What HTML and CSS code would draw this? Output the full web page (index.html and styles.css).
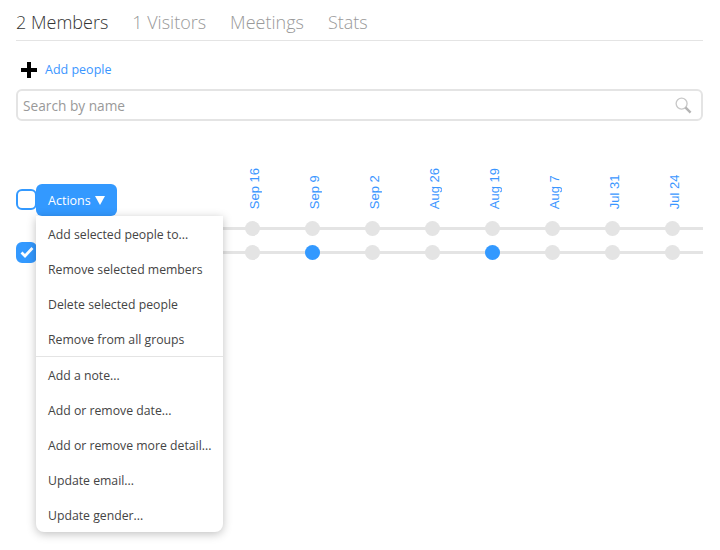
FILE: index.html
```html
<!DOCTYPE html>
<html>
<head>
<title>Members</title>
<link rel="stylesheet" href="styles.css">
</head>
<body>
	<nav class="tabs">
		<a class="tab active">2 Members</a>
		<a class="tab">1 Visitors</a>
		<a class="tab">Meetings</a>
		<a class="tab">Stats</a>
	</nav>
	<div class="add-row">
		<svg class="plus" width="18" height="18" viewBox="0 0 18 18"><path d="M7 1h4v6h6v4h-6v6H7v-6H1V7h6z"/></svg>
		<a class="add-link">Add people</a>
	</div>
	<div class="search">
		<span class="search-text">Search by name</span>
		<svg class="search-icon" width="17" height="17" viewBox="0 0 18 18">
			<circle cx="7" cy="7" r="5.8" fill="none" stroke="#c8c8c8" stroke-width="1.4"/>
			<path d="M11 11l5.5 5.5" stroke="#b4b4b4" stroke-width="2.6"/>
		</svg>
	</div>
	<section class="attendance">
		<div class="head-row">
			<div class="left-cell">
				<span class="check"></span>
				<button class="actions">Actions <span class="caret"></span></button>
			</div>
			<div class="dates">
				<div class="date"><span>Sep 16</span></div>
				<div class="date"><span>Sep 9</span></div>
				<div class="date"><span>Sep 2</span></div>
				<div class="date"><span>Aug 26</span></div>
				<div class="date"><span>Aug 19</span></div>
				<div class="date"><span>Aug 7</span></div>
				<div class="date"><span>Jul 31</span></div>
				<div class="date"><span>Jul 24</span></div>
			</div>
		</div>
		<div class="person">
			<div class="left-cell"></div>
			<div class="dots">
				<i></i><i></i><i></i><i></i><i></i><i></i><i></i><i></i>
			</div>
		</div>
		<div class="person">
			<div class="left-cell">
				<span class="check checked">
					<svg width="14" height="12" viewBox="0 0 14 12"><path d="M1.5 6.5l3.5 3.5 7.5-8" fill="none" stroke="#fff" stroke-width="2.8"/></svg>
				</span>
			</div>
			<div class="dots">
				<i></i><i class="on"></i><i></i><i></i><i class="on"></i><i></i><i></i><i></i>
			</div>
		</div>
		<ul class="menu">
			<li>Add selected people to...</li>
			<li>Remove selected members</li>
			<li>Delete selected people</li>
			<li class="last-group">Remove from all groups</li>
			<li>Add a note...</li>
			<li>Add or remove date...</li>
			<li>Add or remove more detail...</li>
			<li>Update email...</li>
			<li class="last">Update gender...</li>
		</ul>
	</section>
</body>
</html>
```

FILE: styles.css
```css
html, body {
  margin: 0;
  height: 550px;
  overflow: hidden;
  background: #fff;
}

body {
  padding: 0 17px 0 16px;
  font-family: "Open Sans", "Noto Sans", sans-serif;
  color: #333;
}

.tabs {
  display: flex;
  gap: 24px;
  height: 40px;
  border-bottom: 1px solid #e4e4e4;
  font-size: 18px;
  font-weight: 300;
  line-height: 45px;
}

.tab {
  color: #999;
}

.tab.active {
  color: #333;
}

.add-row {
  display: flex;
  align-items: center;
  height: 18px;
  margin: 20px 0 0 4px;
  gap: 7px;
}

.add-link {
  margin-bottom: 2px;
  color: #3b96ff;
  font-size: 12.5px;
}

.search {
  display: flex;
  align-items: center;
  justify-content: space-between;
  box-sizing: border-box;
  height: 32px;
  margin-top: 10px;
  padding: 0 9px 0 5px;
  border: 2px solid #e4e4e4;
  border-radius: 6px;
}

.search-text {
  color: #999;
  font-size: 13.7px;
}

.attendance {
  position: relative;
  margin-top: 63px;
}

.head-row {
  display: flex;
  align-items: flex-end;
  height: 32px;
}

.left-cell {
  display: flex;
  align-items: center;
  flex: none;
  width: 207px;
}

.head-row .left-cell {
  height: 32px;
}

.head-row .check {
  margin-top: -2px;
}

.check {
  display: flex;
  align-items: center;
  justify-content: center;
  box-sizing: border-box;
  flex: none;
  width: 21px;
  height: 21px;
  margin-right: -1px;
  border: 2px solid #3399ff;
  border-radius: 6px;
  background: #fff;
}

.check.checked {
  background: #3399ff;
}

.actions {
  position: relative;
  width: 81px;
  height: 32px;
  padding: 0;
  border: 0;
  border-radius: 6px;
  background: #3399ff;
  color: #fff;
  font-family: inherit;
  font-size: 12.5px;
}

.caret {
  display: inline-block;
  width: 0;
  height: 0;
  margin-left: 1px;
  border-left: 5.5px solid transparent;
  border-right: 5.5px solid transparent;
  border-top: 9px solid #fff;
  vertical-align: 0;
}

.dates, .dots {
  display: flex;
  flex: 1;
}

.date {
  display: flex;
  justify-content: center;
  width: 60px;
  margin-bottom: 7px;
}

.date span {
  margin-left: 4px;
  writing-mode: vertical-rl;
  transform: rotate(180deg);
  color: #3b96ff;
  font-family: "Liberation Sans", Arial, sans-serif;
  font-size: 13px;
  line-height: 16px;
  white-space: nowrap;
}

.person {
  display: flex;
  align-items: center;
  height: 24px;
}

.person .left-cell {
  height: 24px;
}

.dots {
  box-sizing: border-box;
  align-items: flex-start;
  height: 24px;
  padding-top: 5px;
  background: linear-gradient(#e4e4e4, #e4e4e4) 0 11px / 100% 3px no-repeat;
}

.dots i {
  display: block;
  flex: none;
  width: 15px;
  height: 15px;
  margin: 0 23px 0 22px;
  border-radius: 50%;
  background: #e4e4e4;
}

.dots i.on {
  background: #3399ff;
}

.menu {
  position: absolute;
  top: 32px;
  left: 20px;
  width: 187px;
  margin: 0;
  padding: 1px 0 0;
  list-style: none;
  border-radius: 0 0 8px 8px;
  background: #fff;
  box-shadow: 0 2px 10px rgba(0, 0, 0, 0.25);
  font-size: 12.25px;
}

.menu li {
  height: 35px;
  padding-left: 12px;
  line-height: 35px;
  white-space: nowrap;
  color: #444;
}

.menu li.last-group {
  height: 34px;
  margin-bottom: 1px;
  border-bottom: 1px solid #e4e4e4;
}

.menu li.last {
  height: 34px;
}
```
